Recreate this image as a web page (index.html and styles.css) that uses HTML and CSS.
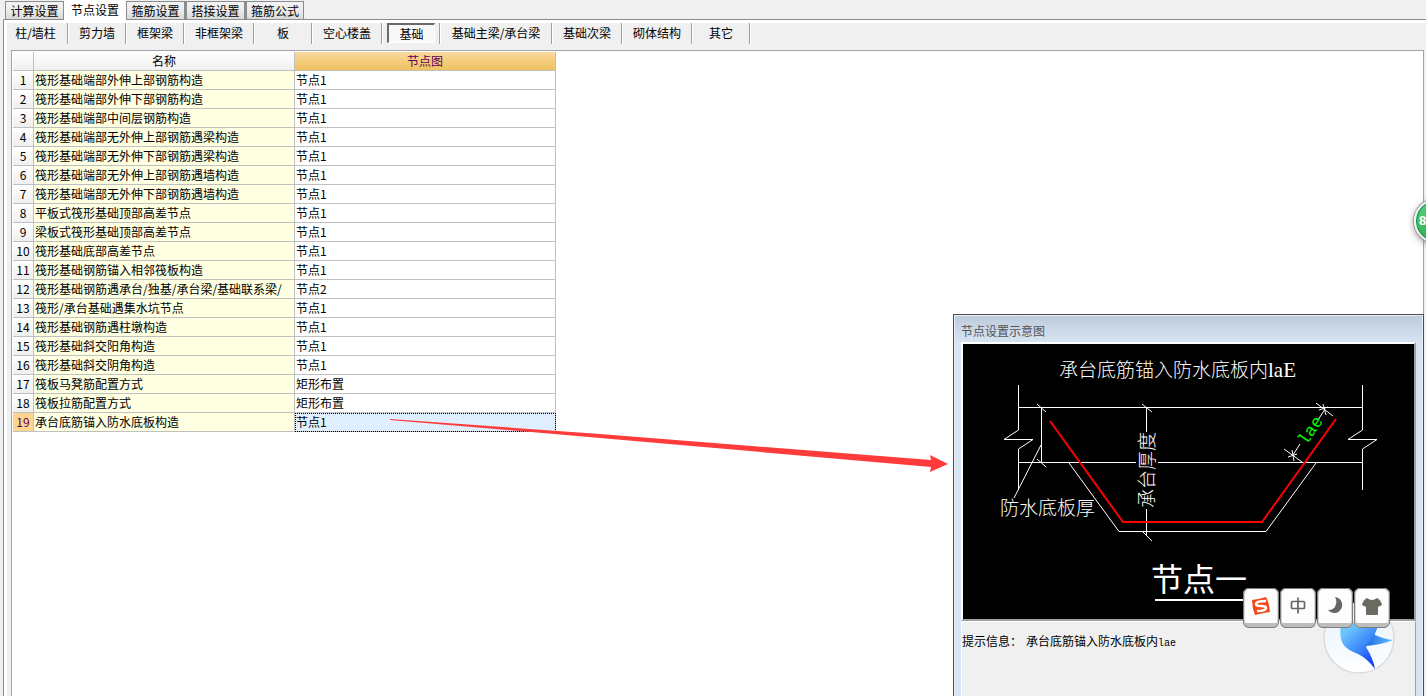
FILE: index.html
```
<!DOCTYPE html>
<html lang="zh-CN">
<head>
<meta charset="utf-8">
<title>节点设置</title>
<link rel="stylesheet" href="styles.css">
</head>
<body>
<nav class="tabs">
  <button class="tab" type="button">计算设置</button>
  <button class="tab tab-active" type="button">节点设置</button>
  <button class="tab" type="button">箍筋设置</button>
  <button class="tab" type="button">搭接设置</button>
  <button class="tab" type="button">箍筋公式</button>
</nav>
<main class="page">
  <div class="toolbar">
    <div class="cell"><button class="tool" type="button">柱/墙柱</button></div>
    <div class="cell"><button class="tool" type="button">剪力墙</button></div>
    <div class="cell"><button class="tool" type="button">框架梁</button></div>
    <div class="cell cell-mid"><button class="tool" type="button">非框架梁</button></div>
    <div class="cell"><button class="tool" type="button">板</button></div>
    <div class="cell cell-mid"><button class="tool" type="button">空心楼盖</button></div>
    <div class="cell"><button class="tool tool-checked" type="button">基础</button></div>
    <div class="cell cell-wide"><button class="tool" type="button">基础主梁/承台梁</button></div>
    <div class="cell cell-mid"><button class="tool" type="button">基础次梁</button></div>
    <div class="cell cell-mid"><button class="tool" type="button">砌体结构</button></div>
    <div class="cell"><button class="tool" type="button">其它</button></div>
  </div>
  <div class="sheet">
    <table class="grid">
      <colgroup><col class="col-no"><col class="col-name"><col class="col-node"></colgroup>
      <thead><tr><th></th><th>名称</th><th class="head-current">节点图</th></tr></thead>
      <tbody>
        <tr><th>1</th><td>筏形基础端部外伸上部钢筋构造</td><td>节点1</td></tr>
        <tr><th>2</th><td>筏形基础端部外伸下部钢筋构造</td><td>节点1</td></tr>
        <tr><th>3</th><td>筏形基础端部中间层钢筋构造</td><td>节点1</td></tr>
        <tr><th>4</th><td>筏形基础端部无外伸上部钢筋遇梁构造</td><td>节点1</td></tr>
        <tr><th>5</th><td>筏形基础端部无外伸下部钢筋遇梁构造</td><td>节点1</td></tr>
        <tr><th>6</th><td>筏形基础端部无外伸上部钢筋遇墙构造</td><td>节点1</td></tr>
        <tr><th>7</th><td>筏形基础端部无外伸下部钢筋遇墙构造</td><td>节点1</td></tr>
        <tr><th>8</th><td>平板式筏形基础顶部高差节点</td><td>节点1</td></tr>
        <tr><th>9</th><td>梁板式筏形基础顶部高差节点</td><td>节点1</td></tr>
        <tr><th>10</th><td>筏形基础底部高差节点</td><td>节点1</td></tr>
        <tr><th>11</th><td>筏形基础钢筋锚入相邻筏板构造</td><td>节点1</td></tr>
        <tr><th>12</th><td>筏形基础钢筋遇承台/独基/承台梁/基础联系梁/</td><td>节点2</td></tr>
        <tr><th>13</th><td>筏形/承台基础遇集水坑节点</td><td>节点1</td></tr>
        <tr><th>14</th><td>筏形基础钢筋遇柱墩构造</td><td>节点1</td></tr>
        <tr><th>15</th><td>筏形基础斜交阳角构造</td><td>节点1</td></tr>
        <tr><th>16</th><td>筏形基础斜交阴角构造</td><td>节点1</td></tr>
        <tr><th>17</th><td>筏板马凳筋配置方式</td><td>矩形布置</td></tr>
        <tr><th>18</th><td>筏板拉筋配置方式</td><td>矩形布置</td></tr>
        <tr class="row-current"><th>19</th><td>承台底筋锚入防水底板构造</td><td>节点1</td></tr>
      </tbody>
    </table>
  </div>
</main>

<section class="dialog" aria-label="节点设置示意图">
  <h2 class="dialog-title">节点设置示意图</h2>
  <div class="drawing">
    <svg viewBox="0 0 451 275" width="451" height="275">
      <g class="thin">
        <path d="M55.5 41V86L41 95.500H70L55.500 105V146"/>
        <path d="M399.500 41V86L385 95.500H414L399.500 105V146"/>
        <path d="M55 63.500H399M55 118.500H173M195 118.500H399"/>
        <path d="M78.500 63V118M74 60L83 68M74 115L83 123M78 101L51 154"/>
        <path d="M183.500 63V88M179 60L189 68M183.500 165V192M180 188L189 197"/>
        <path d="M106 119L156 187.500H303L353 119"/>
        <path d="M337 100L330 111M355 76L362 65M353 59L370 72M321 105L339 118M360 60L363 71M356 66L365 63M329 106L331 117M325 113L334 110"/>
      </g>
      <path class="rebar" d="M87 77L160 178H299L373 75"/>
      <text class="cad" x="96" y="33">承台底筋锚入防水底板内<tspan class="cad-latin">laE</tspan></text>
      <text class="cad" x="37" y="171">防水底板厚</text>
      <text class="cad" transform="translate(191 164) rotate(-90)">承台厚度</text>
      <text class="cad-green" transform="translate(343 102) rotate(-55)">lae</text>
      <text class="cad-title" x="188" y="247">节点一</text>
      <path class="rule" d="M192 256H290"/>
    </svg>
  </div>
  <p class="hint"><span>提示信息：</span><span>承台底筋锚入防水底板内<span class="hint-latin">lae</span></span></p>
</section>

<svg class="pointer" viewBox="0 0 558 54" width="558" height="54" aria-hidden="true">
  <path d="M0 0L210 15L541 41L540 36L558 45L540 53L541 48L210 19L0 1Z"/>
</svg>

<svg class="bird" viewBox="0 0 76 76" width="76" height="76" aria-hidden="true">
  <defs>
    <linearGradient id="body" x1="0" y1="0" x2="0.800" y2="1"><stop offset="0.200" stop-color="#6cc4ff"/><stop offset="0.600" stop-color="#3a86fb"/><stop offset="1" stop-color="#0a35f5"/></linearGradient>
    <linearGradient id="wing" x1="0" y1="0" x2="1" y2="0"><stop offset="0" stop-color="#1f68dd"/><stop offset="1" stop-color="#5fc0ff"/></linearGradient>
    <linearGradient id="disc" x1="0" y1="0" x2="0" y2="1"><stop offset="0" stop-color="#e4f2fd"/><stop offset="1" stop-color="#ffffff"/></linearGradient>
  </defs>
  <circle cx="38" cy="38" r="35" fill="url(#disc)" stroke="#d9dbde" stroke-width="1.500"/>
  <path d="M20 22Q18 38 22 44Q26 50 37 54Q47 59 54 69Q52 58 45 47L53 36L58 24Z" fill="url(#body)"/>
  <path d="M52 34Q62 39 72 40Q60 45 44 46Q50 42 52 34Z" fill="url(#wing)"/>
</svg>

<div class="ime">
  <button class="key" type="button" aria-label="搜狗">
    <svg viewBox="0 0 20 20" width="20" height="20"><path d="M1 4Q9 3 15 1Q18 6 19 16Q12 17 4 19Q1 12 1 4Z" fill="#f4491f"/><path d="M15 5Q5 5 5 8Q5 10 10 10Q15 10 15 12Q15 15 6 15" fill="none" stroke="#fff" stroke-width="2.500"/></svg>
  </button>
  <button class="key" type="button" aria-label="中文">
    <svg viewBox="0 0 20 20" width="20" height="20" fill="none" stroke="#666" stroke-width="1.700"><rect x="3.500" y="5.500" width="13" height="7" rx="1"/><path d="M10 1.500V17.500"/></svg>
  </button>
  <button class="key" type="button" aria-label="半角">
    <svg viewBox="0 0 20 20" width="20" height="20"><path d="M10 1A8 8 0 1 1 3 14Q10 14 11 8Q12 4 10 1Z" fill="#666"/></svg>
  </button>
  <button class="key" type="button" aria-label="皮肤">
    <svg viewBox="0 0 22 20" width="22" height="20"><path d="M6 2Q11 6 16 2Q20 4 21 9L17 11V18Q17 19 16 19H6Q5 19 5 18V11L1 9Q2 4 6 2Z" fill="#6b6a60"/></svg>
  </button>
</div>
<div class="badge-clip"><span class="badge">8</span></div>
</body>
</html>
```

FILE: styles.css
```
* { box-sizing: border-box; }

body {
  position: relative;
  display: flex;
  flex-direction: column;
  height: 100vh;
  margin: 0;
  overflow: hidden;
  background: #f0f0f0;
  color: #000;
  font: 12px/18px "Noto Sans CJK SC", sans-serif;
}

button {
  margin: 0;
  padding: 0;
  border: 0;
  background: none;
  color: inherit;
  font: inherit;
}

.tabs {
  display: flex;
  align-items: flex-end;
  height: 19px;
  padding-left: 5px;
}

.tab {
  flex: none;
  width: 60px;
  height: 18px;
  border: 1px solid #8b8c90;
  border-right-width: 2px;
  border-bottom: 0;
  background: linear-gradient(#f3f3f3, #ebebeb 50%, #d8d8d8);
  line-height: 18px;
}

.tab:first-child { width: 59px; border-right-width: 1px; }
.tab:last-child { width: 58px; border-right-width: 1px; }

.tab-active {
  z-index: 1;
  width: 62px;
  height: 20px;
  margin-bottom: -1px;
  border: 0;
  background: #fff;
  line-height: 18px;
}

.page {
  display: flex;
  flex: 1;
  flex-direction: column;
  min-height: 0;
  margin-left: 3px;
  border: solid #8b8c90;
  border-width: 1px 0 0 1px;
  box-shadow: inset 3px 3px #fff;
}

.toolbar {
  display: flex;
  height: 30px;
  padding: 3px 0 0 4px;
}

.cell {
  flex: none;
  width: 58px;
  height: 21px;
  padding: 0 4px 0 5px;
  border-right: 1px solid #a0a0a0;
  box-shadow: 1px 0 #fff;
}

.cell:first-child { width: 60px; padding-left: 0; }
.cell-mid { width: 70px; }
.cell-wide { width: 112px; }

.tool {
  display: block;
  width: 100%;
  height: 20px;
  line-height: 20px;
  white-space: nowrap;
}

.tool-checked {
  border: 1px solid #fff;
  border-top: 2px solid #696969;
  border-left: 2px solid #696969;
  background: #f8f8f8;
  line-height: 17px;
}

.sheet {
  flex: 1;
  min-height: 0;
  margin: 0 2px 0 7px;
  padding: 1px;
  border: 1px solid #a0a3ab;
  border-bottom: 0;
  background: #fff;
}

.grid {
  table-layout: fixed;
  width: 543px;
  border-collapse: separate;
  border-spacing: 0;
}

.col-no { width: 21px; }
.col-name, .col-node { width: 261px; }

.grid th,
.grid td {
  height: 19px;
  padding: 0;
  border: solid #c0c0c0;
  border-width: 0 1px 1px 0;
  overflow: hidden;
  font-weight: 400;
  line-height: 18px;
  white-space: nowrap;
}

.grid th { background: linear-gradient(#fff, #efefef); text-align: center; }
.grid td { padding-left: 1px; }
.grid td:nth-child(2) { background: #ffffe1; }
.grid .head-current { background: linear-gradient(#f9d99f, #f0c15c); color: #5a005a; }
.grid .row-current th { background: #ffd58d; color: #5a005a; }

.grid .row-current td:last-child {
  background: #e0efff;
  outline: 1px dotted #000;
  outline-offset: -1px;
}

.dialog {
  position: absolute;
  top: 314px;
  right: 2px;
  bottom: 0;
  display: flex;
  flex-direction: column;
  width: 471px;
  padding: 0 7px;
  border: 1px solid #4c4c50;
  border-bottom: 0;
  background: linear-gradient(#bccbdb, #d7e4f2 28px);
  box-shadow: inset 1px 1px #e8eff7, inset -1px 0 #e8eff7;
}

.dialog-title {
  height: 27px;
  margin: 0;
  padding-top: 7px;
  color: #505258;
  font-size: 12px;
  font-weight: 400;
}

.drawing {
  border: 2px solid #fff;
  border-right-color: #a0a0a0;
  border-bottom-color: #a0a0a0;
  background: #000;
}

.drawing svg { display: block; }
.thin { fill: none; stroke: #fff; stroke-width: 1; }
.rebar { fill: none; stroke: #f00; stroke-width: 2; }
.rule { stroke: #fff; stroke-width: 2; }

.cad {
  fill: #fff;
  font-size: 19px;
  font-weight: 300;
}

.cad-latin {
  font-family: "Liberation Serif", serif;
  font-size: 21px;
}

.cad-green {
  fill: #0f0;
  font-family: "Liberation Mono", monospace;
  font-size: 17px;
}

.cad-title { fill: #fff; font-size: 32px; }

.hint {
  display: flex;
  flex: 1;
  gap: 4px;
  margin: 0;
  padding-top: 10px;
  border: solid #fff;
  border-width: 1px 0 0 1px;
  border-right: 1px solid #a0a0a0;
  background: #f0f0f0;
}

.hint-latin { font-family: "Liberation Mono", monospace; font-size: 10px; }

.pointer {
  position: absolute;
  top: 419px;
  left: 390px;
  fill: #ff3b3b;
}

.bird {
  position: absolute;
  top: 600px;
  right: 29px;
}

.ime {
  position: absolute;
  top: 588px;
  right: 36px;
  display: flex;
  gap: 1px;
}

.key {
  display: flex;
  align-items: center;
  justify-content: center;
  width: 36px;
  height: 40px;
  border: solid #d6d6d6;
  border-width: 1px 2px 5px;
  border-top-color: #fff;
  border-bottom-color: #bdbdbd;
  border-radius: 6px;
  background: #fdfdfd;
  outline: 1px solid #7d7d7d;
  outline-offset: -1px;
}

.badge-clip {
  position: absolute;
  top: 190px;
  right: 0;
  width: 22px;
  height: 64px;
  overflow: hidden;
}

.badge {
  display: block;
  width: 44px;
  height: 44px;
  margin: 9px 0 0 10px;
  padding-left: 3px;
  border: 2px solid #f2f2f2;
  border-radius: 50%;
  background: linear-gradient(#58d07c, #2fb254);
  box-shadow: 0 0 0 1px #999, 0 2px 7px #888, inset 0 0 0 1px #168a45;
  color: #fff;
  font: bold 13px/40px "Liberation Sans", sans-serif;
}
```
